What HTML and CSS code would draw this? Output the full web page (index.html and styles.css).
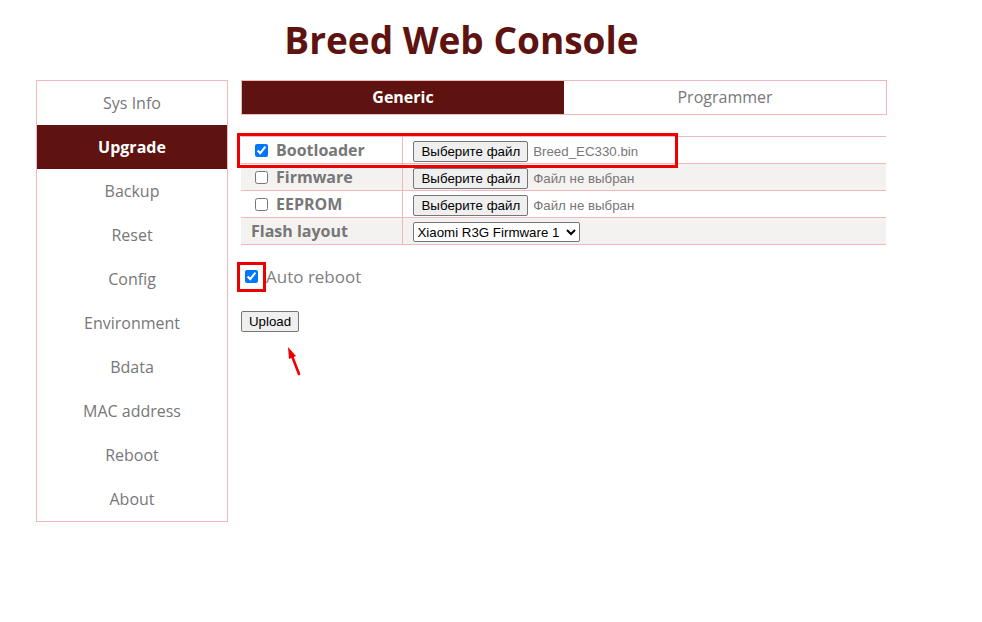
FILE: index.html
```html
<!DOCTYPE html>
<html>
<head>
<meta charset="utf-8">
<link rel="stylesheet" href="styles.css">
</head>
<body>
<div class="page">
  <h1 class="title">Breed Web Console</h1>
  <div class="layout">
    <ul class="nav">
      <li>Sys Info</li>
      <li class="active">Upgrade</li>
      <li>Backup</li>
      <li>Reset</li>
      <li>Config</li>
      <li>Environment</li>
      <li>Bdata</li>
      <li>MAC address</li>
      <li>Reboot</li>
      <li>About</li>
    </ul>
    <div class="main">
      <div class="tabs">
        <div class="tab active">Generic</div>
        <div class="tab">Programmer</div>
      </div>
      <table class="grid">
        <tr>
          <td class="lbl"><input type="checkbox" checked><span>Bootloader</span></td>
          <td class="val"><button class="fbtn">Выберите файл</button><span class="fname">Breed_EC330.bin</span></td>
        </tr>
        <tr class="alt">
          <td class="lbl"><input type="checkbox"><span>Firmware</span></td>
          <td class="val"><button class="fbtn">Выберите файл</button><span class="fname">Файл не выбран</span></td>
        </tr>
        <tr>
          <td class="lbl"><input type="checkbox"><span>EEPROM</span></td>
          <td class="val"><button class="fbtn">Выберите файл</button><span class="fname">Файл не выбран</span></td>
        </tr>
        <tr class="alt">
          <td class="lbl plain">Flash layout</td>
          <td class="val"><select class="sel"><option>Xiaomi R3G Firmware 1</option></select></td>
        </tr>
      </table>
      <div class="reboot"><input type="checkbox" checked><span>Auto reboot</span></div>
      <button class="upload">Upload</button>
      <div class="mark mark-row"></div>
      <div class="mark mark-cb"></div>
      <svg class="arrow" width="20" height="34" viewBox="0 0 20 34">
        <line x1="14" y1="30" x2="7" y2="12" stroke="#ee0000" stroke-width="2.6" stroke-linecap="round"/>
        <polygon points="3,3 11,12 4,15" fill="#ee0000"/>
      </svg>
    </div>
  </div>
</div>
</body>
</html>
```
FILE: styles.css
```css
html, body {
  margin: 0;
  padding: 0;
  background: #fff;
}
body {
  font-family: "Open Sans", "Noto Sans", sans-serif;
  color: #777;
}
.page {
  width: 851px;
  margin-left: 36px;
}
.title {
  margin: 0;
  padding-top: 14px;
  height: 80px;
  box-sizing: border-box;
  text-align: center;
  font-size: 37px;
  line-height: 52px;
  font-weight: 700;
  color: #5e1310;
  letter-spacing: 0;
}
.layout {
  display: flex;
  gap: 13px;
  align-items: flex-start;
}
.nav {
  list-style: none;
  margin: 0;
  padding: 0;
  width: 190px;
  border: 1px solid #f0b9b9;
}
.nav li {
  height: 44px;
  line-height: 44px;
  text-align: center;
  font-size: 16px;
  color: #777;
}
.nav li.active {
  background: #5e1310;
  color: #fff;
  font-weight: 700;
}
.main {
  position: relative;
  width: 646px;
}
.tabs {
  display: flex;
  border: 1px solid #f0b9b9;
  height: 33px;
}
.tab {
  flex: 1;
  text-align: center;
  line-height: 33px;
  font-size: 16px;
  color: #777;
}
.tab.active {
  background: #5e1310;
  color: #fff;
  font-weight: 700;
}
.grid {
  margin-top: 21px;
  width: 645px;
  border-collapse: collapse;
  border-top: 1px solid #f0b9b9;
}
.grid td {
  height: 26px;
  padding: 0;
  border-bottom: 1px solid #f0b9b9;
  vertical-align: middle;
}
.grid tr.alt td {
  background: #f4f2f1;
}
.lbl {
  width: 161px;
  border-right: 1px solid #f0b9b9;
  font-size: 16px;
  font-weight: 700;
  color: #777;
  padding-left: 10px !important;
  box-sizing: border-box;
  white-space: nowrap;
}
.lbl input {
  margin: 0 8px 0 4px;
  width: 13px;
  height: 13px;
  vertical-align: -1px;
}
.val {
  padding-left: 10px !important;
  white-space: nowrap;
}
.fbtn {
  font-family: "Liberation Sans", Arial, sans-serif;
  font-size: 13.3px;
  color: #000;
  height: 21px;
  padding: 0 7px 0 8px;
  border: 1px solid #767676;
  border-radius: 2px;
  background: #efefef;
  vertical-align: middle;
}
.fname {
  font-family: "Liberation Sans", Arial, sans-serif;
  font-size: 13.3px;
  color: #777;
  margin-left: 5px;
  vertical-align: middle;
}
.sel {
  font-family: "Liberation Sans", Arial, sans-serif;
  font-size: 13.3px;
  color: #000;
  height: 20px;
  width: 167px;
  border: 1px solid #767676;
  border-radius: 2px;
  background: #fff;
  vertical-align: middle;
}
.reboot {
  margin-top: 18px;
  height: 26px;
  display: flex;
  align-items: center;
  font-size: 17px;
  color: #808080;
}
.reboot input {
  margin: 0 8px 0 4px;
  width: 13px;
  height: 13px;
}
.upload {
  margin-top: 22px;
  font-family: "Liberation Sans", Arial, sans-serif;
  font-size: 13.3px;
  color: #000;
  height: 21px;
  padding: 0 7px;
  border: 1px solid #767676;
  border-radius: 2px;
  background: #efefef;
}
.mark {
  position: absolute;
  border: 3px solid #ee0000;
  box-sizing: border-box;
}
.mark-row {
  left: -4px;
  top: 53px;
  width: 441px;
  height: 35px;
}
.mark-cb {
  left: -4px;
  top: 182px;
  width: 29px;
  height: 30px;
}
.arrow {
  position: absolute;
  left: 44px;
  top: 264px;
}
```
